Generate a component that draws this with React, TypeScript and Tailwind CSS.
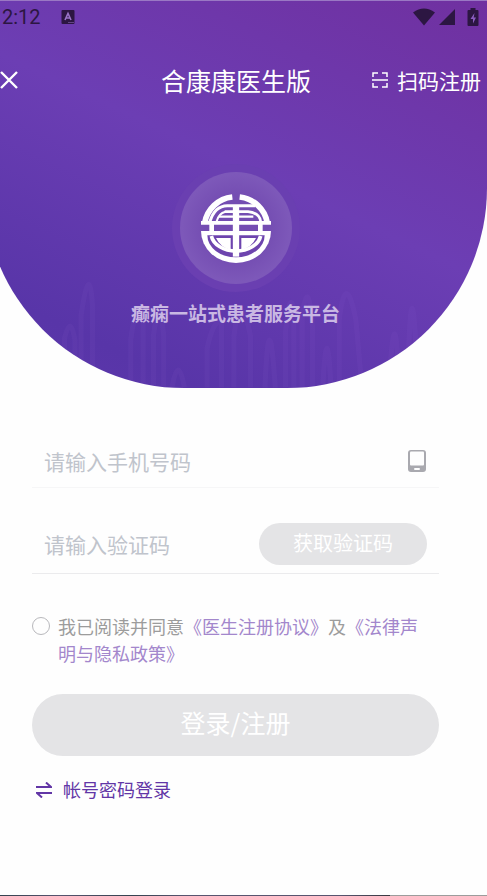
import { useState } from 'react';

const Waves = () => (
  <svg viewBox="0 0 487 110" className="absolute inset-x-0 bottom-0 w-full" fill="none" stroke="#8b5fd0" strokeOpacity="0.09" strokeWidth="5" strokeLinejoin="round" aria-hidden="true">
    <path d="M78 110V62Q84 38 88 64V110M94 110V40Q102-14 105 30V110" />
    <path d="M142 110V64Q148 20 154 44V110M164 110V60Q170 16 174 60V110" />
    <path d="M182 110Q188 76 194 110M216 110V72Q222 44 230 46V110M242 110V60Q248 10 258 60V110" />
    <path d="M272 110Q276 18 282 110M292 110V56Q296 14 300 34V110M308 110V40Q314 0 318 50V110" />
    <path d="M328 110Q332 34 336 110M344 110V44Q350-6 360 44L366 110" />
    <path d="M392 110Q398 6 402 110M410 110Q414-44 420 110" />
  </svg>
);

const Logo = () => (
  <svg viewBox="0 0 228 228" className="size-19" fill="none" stroke="#fff" role="img" aria-label="合康康">
    <path d="M103 21A94 94 0 0 0 20 99M125 21A94 94 0 0 1 208 99" strokeWidth="17" />
    <path d="M9 93H219V104H9Z" fill="#fff" stroke="none" />
    <path d="M9 123H219A105 96 0 0 1 9 123Z" fill="#fff" stroke="none" />
    <path d="M28 136H200A86 66 0 0 1 28 136Z" fill="#6d44ae" stroke="none" />
    <path d="M40 138A75 54 0 0 0 188 138" strokeWidth="11" />
    <path d="M54 144H98V180Q66 171 54 144ZM174 144H130V180Q162 171 174 144Z" fill="#fff" stroke="none" />
    <path d="M114 48V200" strokeWidth="19" />
    <path d="M36 94Q50 48 88 47H172" strokeWidth="9" />
    <path d="M80 65H150Q184 68 188 94" strokeWidth="8" />
    <path d="M56 94Q62 70 82 65" strokeWidth="6" />
    <path d="M62 80H166" strokeWidth="7" />
    <path d="M41 98V130M187 98V130" strokeWidth="14" />
  </svg>
);

const StatusBar = () => (
  <div className="flex h-8 items-center pl-0.5 pr-2 pt-0.5 text-[#2c1642]">
    <span className="font-[Roboto] text-[20px] leading-8">2:12</span>
    <svg viewBox="0 0 13 14" className="ml-5 h-3.5 w-3.5" aria-hidden="true">
      <rect width="13" height="14" rx="1" fill="currentColor" />
      <path d="M3.5 10L6.5 3.5L9.5 10M4.5 8H8.5" fill="none" stroke="#9a74c8" strokeWidth="1.6" />
      <path d="M7 12.5H12" stroke="#9a74c8" strokeDasharray="1 1" />
    </svg>
    <div className="ml-auto flex items-center">
      <svg viewBox="0 0 22 17" className="h-4.5 w-5.5" fill="currentColor" aria-hidden="true">
        <path d="M0 4Q11-4 22 4L11 17Z" />
      </svg>
      <svg viewBox="0 0 16 16" className="ml-1 size-4" fill="currentColor" aria-hidden="true">
        <path d="M16 0V16H0Z" />
      </svg>
      <svg viewBox="0 0 11 18" className="ml-3 h-4.5 w-3" aria-hidden="true">
        <path d="M3 0H8V2H10Q11 2 11 3V17Q11 18 10 18H1Q0 18 0 17V3Q0 2 1 2H3Z" fill="currentColor" />
        <path d="M7 5L3 11H5.5V15.5L8.5 9.5H6.2Z" fill="#8a5cc0" />
      </svg>
    </div>
  </div>
);

export default function App() {
  const [phone, setPhone] = useState('');
  const [code, setCode] = useState('');
  const [agreed, setAgreed] = useState(false);

  return (
    <div className="flex min-h-screen flex-col overflow-x-hidden bg-[#fefefe] font-['Noto_Sans_CJK_SC',sans-serif]">
      <header className="relative h-97">
        <div className="absolute inset-y-0 -left-4 right-0 overflow-hidden rounded-b-[200px] border-t border-[#9a78c4] bg-[linear-gradient(205deg,#7030a0_0%,#6c3eb4_45%,#5835a8_84%,#5c37ac_100%)]">
          <Waves />
        </div>
        <div className="relative">
          <StatusBar />
          <nav className="mt-7 flex h-10 items-center text-white">
            <div className="w-[161px]">
              <button type="button" aria-label="关闭" className="block">
                <svg viewBox="0 0 18 18" className="size-4.5" stroke="currentColor" strokeWidth="2.4" aria-hidden="true">
                  <path d="M1 1L17 17M17 1L1 17" />
                </svg>
              </button>
            </div>
            <h1 className="text-[25px] leading-10">合康康医生版</h1>
            <button type="button" className="ml-auto flex items-center gap-2 pr-1.5 text-[21px] leading-10">
              <svg viewBox="0 0 18 18" className="size-4.5" fill="none" stroke="currentColor" strokeWidth="1.5" aria-hidden="true">
                <path d="M2 6V2H7M11 2H16V6M16 12V16H11M7 16H2V12M1 9H17" />
              </svg>
              扫码注册
            </button>
          </nav>
          <div className="mr-4 mt-16 flex flex-col items-center">
            <div className="rounded-full bg-[#6a3fb1] p-2">
              <div className="flex size-28 items-center justify-center rounded-full bg-[radial-gradient(#744db2_40%,#7d58b9_68%)]">
                <Logo />
              </div>
            </div>
            <p className="mt-2 text-[19px] font-bold leading-[26px] text-[#c9b8e3]">癫痫一站式患者服务平台</p>
          </div>
        </div>
      </header>

      <form className="ml-8 mr-12 mt-12" onSubmit={e => e.preventDefault()}>
        <div className="flex h-13 items-center border-b border-[#f6f6f7] px-3 pb-0.5">
          <input type="tel" aria-label="手机号码" placeholder="请输入手机号码" value={phone} onChange={e => setPhone(e.target.value)}
            className="min-w-0 flex-1 text-[21px] leading-8 outline-none placeholder:text-[#c0c4cc]" />
          <svg viewBox="0 0 20 24" className="h-6 w-5" aria-hidden="true">
            <rect x="1" y="1" width="18" height="22" rx="3" fill="#a9a9af" />
            <rect x="3" y="2.5" width="14" height="14" rx="1" fill="#fefefe" />
            <rect x="7" y="19" width="6" height="2" rx="1" fill="#fefefe" />
          </svg>
        </div>
        <div className="mt-7 flex h-14.5 items-center border-b border-[#ebebed] px-3 pb-0.5">
          <input type="text" aria-label="验证码" placeholder="请输入验证码" value={code} onChange={e => setCode(e.target.value)}
            className="min-w-0 flex-1 text-[21px] leading-8 outline-none placeholder:text-[#c0c4cc]" />
          <button type="button" className="h-10.5 w-42 shrink-0 rounded-full bg-[#e4e4e6] pb-0.5 text-[20px] leading-8 text-white">获取验证码</button>
        </div>

        <div className="mt-[39px] flex gap-2 pr-3">
          <input id="agree" type="checkbox" checked={agreed} onChange={e => setAgreed(e.target.checked)}
            className="mt-1 size-4.5 shrink-0 appearance-none rounded-full border border-[#b8b8bc] checked:bg-[#6c3eb4]" />
          <label htmlFor="agree" className="text-[18px] leading-[27px] text-[#9c9c9c]">
            我已阅读并同意<a href="#register" className="text-[#a387cc]">《医生注册协议》</a>及<a href="#privacy" className="text-[#a387cc]">《法律声明与隐私政策》</a>
          </label>
        </div>

        <button type="submit" className="mt-[27px] h-15.5 w-full rounded-full bg-[#e4e4e6] pb-1 text-[25px] text-white">登录/注册</button>
        <a href="#password" className="ml-1 mt-5 inline-flex items-center gap-[11px] text-[18px] leading-[27px] text-[#6236a6]">
          <svg viewBox="0 0 16 16" className="size-4" fill="none" stroke="currentColor" strokeWidth="2" aria-hidden="true">
            <path d="M0 5H15L10 0.5M16 11H1L6 15.5" />
          </svg>
          帐号密码登录
        </a>
      </form>
      <div className="mt-auto h-px bg-[linear-gradient(90deg,#34424f_0%,#57546f_12%,#34424f_27%,#57546f_38%,#57546f_70%,#38383f_80%,#9c9c9c_80%)]" />
    </div>
  );
}
